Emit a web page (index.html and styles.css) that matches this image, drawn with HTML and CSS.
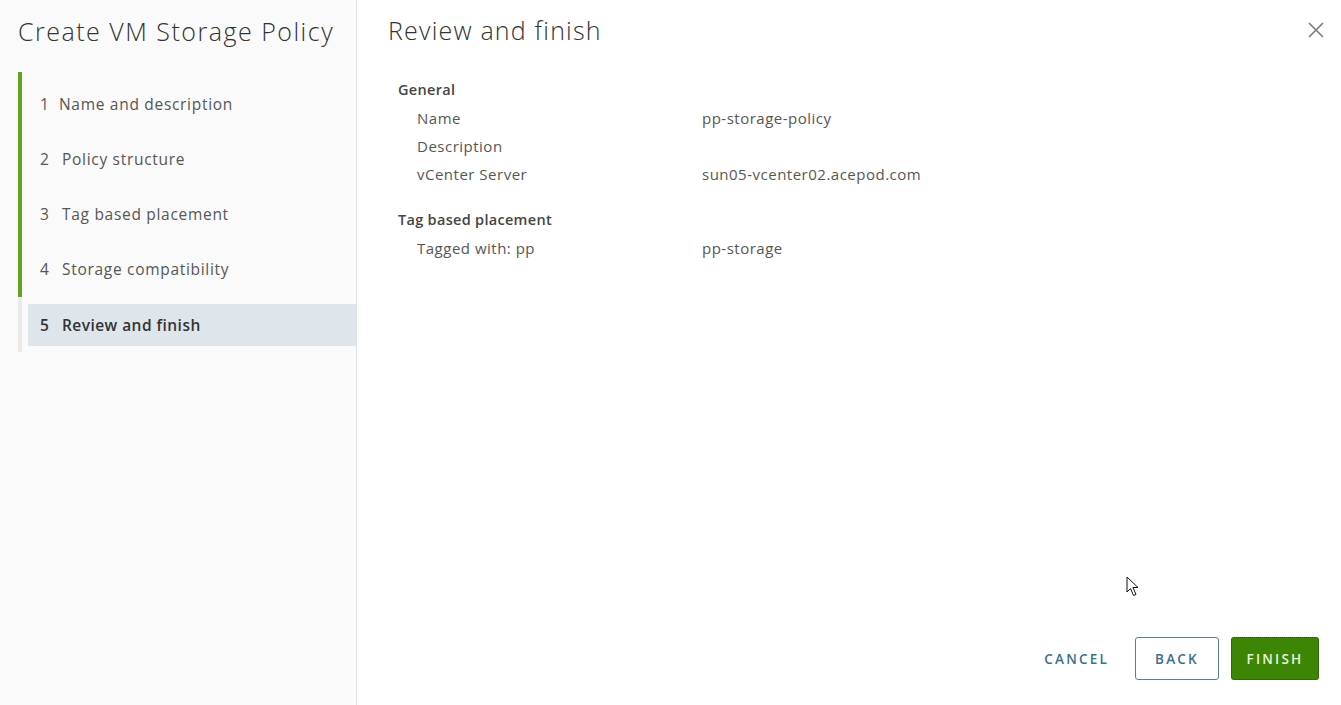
FILE: index.html
```html
<!DOCTYPE html>
<html lang="en">
<head>
<meta charset="utf-8">
<title>Create VM Storage Policy</title>
<link rel="stylesheet" href="styles.css">
</head>
<body>
<div class="wizard">
  <aside class="sidebar">
    <h1 class="wizard-title">Create VM Storage Policy</h1>
    <ol class="steps">
      <li class="step done first"><span class="num">1</span><span>Name and description</span></li>
      <li class="step done"><span class="num">2</span><span>Policy structure</span></li>
      <li class="step done"><span class="num">3</span><span>Tag based placement</span></li>
      <li class="step done"><span class="num">4</span><span>Storage compatibility</span></li>
      <li class="step current"><span class="num">5</span><span class="label">Review and finish</span></li>
    </ol>
  </aside>
  <main class="content">
    <header class="content-header">
      <h2 class="page-title">Review and finish</h2>
      <button class="close" aria-label="Close">
        <svg width="18" height="18" viewBox="0 0 18 18"><path d="M2 2L16 16M16 2L2 16" stroke="#7a7a7a" stroke-width="1.6" fill="none"/></svg>
      </button>
    </header>
    <section class="review">
      <h3 class="group">General</h3>
      <div class="row"><span class="key">Name</span><span class="val">pp-storage-policy</span></div>
      <div class="row"><span class="key">Description</span><span class="val"></span></div>
      <div class="row"><span class="key">vCenter Server</span><span class="val">sun05-vcenter02.acepod.com</span></div>
      <h3 class="group group2">Tag based placement</h3>
      <div class="row"><span class="key">Tagged with: pp</span><span class="val">pp-storage</span></div>
    </section>
    <footer class="actions">
      <button class="btn btn-link">CANCEL</button>
      <button class="btn btn-outline">BACK</button>
      <button class="btn btn-primary">FINISH</button>
    </footer>
    <svg class="cursor" width="14" height="22" viewBox="0 0 14 22"><path d="M1 1L1 16L4.5 12.5L7.5 19.5L10 18.5L7 11.5L12 11.5Z" fill="#fff" stroke="#111" stroke-width="1"/></svg>
  </main>
</div>
</body>
</html>
```
FILE: styles.css
```css
* { box-sizing: border-box; }
html, body { margin: 0; padding: 0; }
body {
  width: 1341px;
  height: 705px;
  overflow: hidden;
  font-family: "Open Sans", "Noto Sans", sans-serif;
  color: #565656;
  background: #fff;
}
.wizard {
  display: flex;
  height: 705px;
}
.sidebar {
  width: 357px;
  flex: none;
  background: #fafafa;
  border-right: 1px solid #e2e2e2;
  padding: 14px 0 0 18px;
}
.wizard-title {
  margin: 0;
  font-size: 25px;
  font-weight: 300;
  color: #333;
  line-height: 34px;
  letter-spacing: 1.5px;
}
.steps {
  list-style: none;
  margin: 24px 0 0 0;
  padding: 0 0 6px 0;
  border-left: 4px solid #e9e9e9;
}
.step {
  display: flex;
  align-items: center;
  height: 55.3px;
  font-size: 15.5px;
  letter-spacing: 0.7px;
  color: #565656;
  padding-left: 18px;
  margin-left: -4px;
  border-left: 4px solid transparent;
}
.step.first {
  height: 59px;
  padding-top: 5px;
}
.step.first .num { width: 19px; }
.step.done { border-left-color: #62a420; }
.step .num { width: 22px; flex: none; }
.step.current {
  height: 42px;
  margin: 7px 0 0 6px;
  border-left: none;
  padding-left: 12px;
  background: #dee5eb;
  color: #333;
  font-weight: 600;
  letter-spacing: 0.45px;
}
.content {
  flex: 1;
  position: relative;
  display: flex;
  flex-direction: column;
  padding: 0 0 0 31px;
}
.content-header {
  display: flex;
  justify-content: space-between;
  align-items: center;
  height: 60px;
}
.page-title {
  margin: 0;
  font-size: 25px;
  font-weight: 300;
  color: #333;
  line-height: 34px;
  letter-spacing: 1.2px;
}
.close {
  border: none;
  background: none;
  padding: 0;
  margin-right: 16px;
  width: 18px;
  height: 18px;
  cursor: pointer;
}
.review {
  padding: 18px 0 0 10px;
  font-size: 15px;
  letter-spacing: 0.5px;
}
.group {
  margin: 0 0 2px 0;
  font-size: 14.5px;
  font-weight: 600;
  color: #454545;
  line-height: 24px;
  letter-spacing: 0.3px;
}
.group2 { margin-top: 20px; }
.row {
  display: flex;
  height: 28px;
  align-items: center;
  padding-left: 19px;
}
.key { width: 285px; flex: none; }
.val { color: #565656; }
.actions {
  margin-top: auto;
  display: flex;
  justify-content: flex-end;
  align-items: center;
  gap: 12px;
  padding: 0 22px 25px 0;
}
.btn {
  font-family: inherit;
  font-size: 13.5px;
  font-weight: 600;
  letter-spacing: 2.2px;
  height: 43px;
  border-radius: 3px;
  cursor: pointer;
}
.btn-link {
  background: none;
  border: none;
  color: #3b6f91;
  padding: 0 12px;
}
.btn-outline {
  background: #fff;
  border: 1px solid #5b7f96;
  color: #3b6f91;
  width: 84px;
  margin-left: 2px;
}
.btn-primary {
  background: #3d8504;
  border: 1px dotted #2b4a10;
  color: #eaf5dc;
  width: 88px;
}
.cursor {
  position: absolute;
  left: 769px;
  top: 576px;
}
```
